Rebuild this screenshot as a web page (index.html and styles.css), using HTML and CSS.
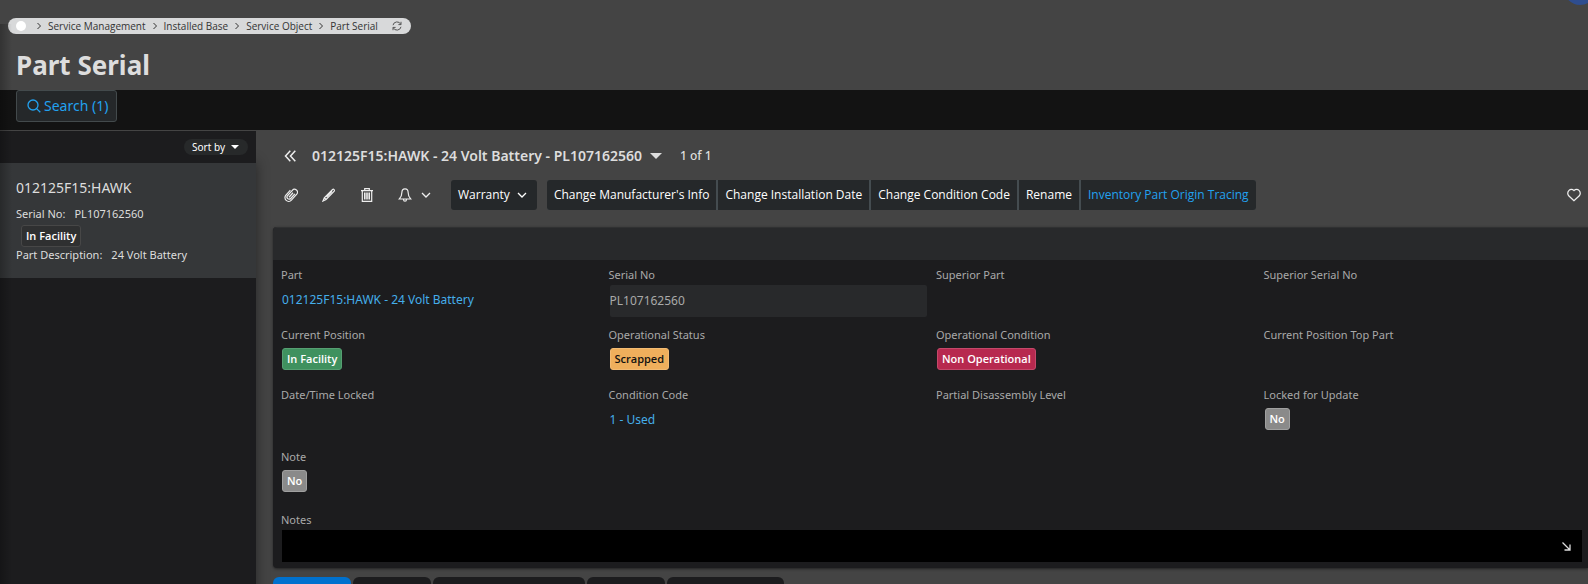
FILE: index.html
```html
<!DOCTYPE html>
<html lang="en">
<head>
<meta charset="utf-8">
<title>Part Serial</title>
<link rel="stylesheet" href="styles.css">
</head>
<body>
<header class="page-head">
  <nav class="crumbs" aria-label="Breadcrumb">
    <a class="crumb-home" href="#" aria-label="Home"></a>
    <svg class="sep" viewBox="0 0 4 8"><path d="M.5 1l3 3-3 3"/></svg>
    <a href="#">Service Management</a>
    <svg class="sep" viewBox="0 0 4 8"><path d="M.5 1l3 3-3 3"/></svg>
    <a href="#">Installed Base</a>
    <svg class="sep" viewBox="0 0 4 8"><path d="M.5 1l3 3-3 3"/></svg>
    <a href="#">Service Object</a>
    <svg class="sep" viewBox="0 0 4 8"><path d="M.5 1l3 3-3 3"/></svg>
    <a href="#">Part Serial</a>
    <button class="refresh" type="button" aria-label="Refresh">
      <svg viewBox="0 0 10 10"><path d="M1 4.2A4.1 4.1 0 0 1 8.8 3.4M9 .8v2.8H6.4M9 5.8A4.1 4.1 0 0 1 1.2 6.6M1 9.2V6.4h2.6"/></svg>
    </button>
  </nav>
  <h1>Part Serial</h1>
  <button class="user-avatar" type="button" aria-label="User menu"></button>
</header>

<div class="search-bar">
  <button class="search-btn" type="button">
    <svg viewBox="0 0 14 14"><circle cx="6" cy="6" r="5"/><path d="M9.6 9.6L13.3 13.3"/></svg>Search (1)
  </button>
</div>

<div class="workspace">
  <aside class="sidebar">
    <div class="sort-row">
      <button class="sort-btn" type="button">Sort by<svg viewBox="0 0 8 4"><path d="M0 0h8L4 4z"/></svg></button>
    </div>
    <article class="card">
      <h2>012125F15:HAWK</h2>
      <p><span>Serial No:</span><span>PL107162560</span></p>
      <span class="tag tag-plain">In Facility</span>
      <p><span>Part Description:</span><span>24 Volt Battery</span></p>
    </article>
  </aside>

  <main class="main">
    <div class="record-row">
      <button class="icon-btn" type="button" aria-label="Collapse list"><svg class="i-12" viewBox="0 0 12 12"><path d="M6.300 .8L1.500 6l4.800 5.200M11.300 .8L6.500 6l4.800 5.200"/></svg></button>
      <button class="record-btn" type="button">012125F15:HAWK - 24 Volt Battery - PL107162560<svg viewBox="0 0 12 6"><path d="M0 0h12L6 6z"/></svg></button>
      <span class="count">1 of 1</span>
    </div>

    <div class="toolbar">
      <div class="tools">
        <button class="icon-btn" type="button" aria-label="Attachments"><svg class="i-14" viewBox="0 0 14 14"><g transform="rotate(42 7 7)"><path d="M9.100 3.600v6.200a2.100 2.100 0 0 1-4.200 0V2.600M4.900 10V2.700a2.900 2.900 0 0 1 5.800-.2v8a3.700 3.700 0 0 1-7.400 0V3.800M7 4v6"/></g></svg></button>
        <button class="icon-btn" type="button" aria-label="Edit"><svg class="i-14" viewBox="0 0 14 14"><path d="M1 13l1.300-3.200 8.300-8.300c1-.8 2.300.5 1.600 1.600L4.100 11.500zM2.600 9.900l1.300 1.400M10 3.400L4.500 9"/></svg></button>
        <button class="icon-btn" type="button" aria-label="Delete"><svg class="i-14" viewBox="0 0 14 14"><path d="M1 2.600h12M4.700 2.500V.7h4.600v1.800M2.300 2.700v10.600h9.400V2.700M4.600 4.500v7M6.200 4.500v7M7.800 4.500v7M9.400 4.500v7"/></svg></button>
        <button class="icon-btn bell" type="button" aria-label="Notifications"><svg class="i-14" viewBox="0 0 14 14"><path d="M7 .8C4.700.8 3.900 2.500 3.900 4.300c0 3.400-.5 4.700-2.600 6.700h11.400c-2.100-2-2.600-3.300-2.600-6.700C10.100 2.500 9.300.8 7 .8zM5.500 11.200c0 2.700 3 2.700 3 0"/></svg><svg class="chev" viewBox="0 0 10 6"><path d="M1 1l4 4 4-4"/></svg></button>
      </div>
      <button class="cmd cmd-menu" type="button">Warranty<svg class="chev" viewBox="0 0 10 6"><path d="M1 1l4 4 4-4"/></svg></button>
      <div class="cmd-group">
        <button class="cmd" type="button">Change Manufacturer's Info</button>
        <button class="cmd" type="button">Change Installation Date</button>
        <button class="cmd" type="button">Change Condition Code</button>
        <button class="cmd" type="button">Rename</button>
        <a class="cmd cmd-link" href="#">Inventory Part Origin Tracing</a>
      </div>
      <button class="icon-btn fav" type="button" aria-label="Favourite"><svg class="i-14" viewBox="0 0 14 14"><path d="M7 12.800L1.700 7.800C-1 4.200 3.500-1.200 7 2.600c3.500-3.800 8 1.600 5.300 5.200z"/></svg></button>
    </div>

    <section class="panel">
      <div class="panel-head"></div>
      <div class="fields">
        <div class="field"><span class="label">Part</span><a class="link" href="#">012125F15:HAWK - 24 Volt Battery</a></div>
        <div class="field"><label class="label" for="serial">Serial No</label><input id="serial" class="text" value="PL107162560" readonly></div>
        <div class="field"><span class="label">Superior Part</span></div>
        <div class="field"><span class="label">Superior Serial No</span></div>

        <div class="field"><span class="label">Current Position</span><span class="tag tag-green">In Facility</span></div>
        <div class="field"><span class="label">Operational Status</span><span class="tag tag-amber">Scrapped</span></div>
        <div class="field"><span class="label">Operational Condition</span><span class="tag tag-red">Non Operational</span></div>
        <div class="field"><span class="label">Current Position Top Part</span></div>

        <div class="field"><span class="label">Date/Time Locked</span></div>
        <div class="field"><span class="label">Condition Code</span><a class="link" href="#">1 - Used</a></div>
        <div class="field"><span class="label">Partial Disassembly Level</span></div>
        <div class="field"><span class="label">Locked for Update</span><span class="tag tag-grey">No</span></div>

        <div class="field"><span class="label">Note</span><span class="tag tag-grey">No</span></div>
        <div class="field wide">
          <label class="label" for="notes">Notes</label>
          <div class="notes-box">
            <textarea id="notes" class="notes" rows="1"></textarea>
            <button class="expand" type="button" aria-label="Expand notes"><svg viewBox="0 0 9 9"><path d="M.5.5l7.500 7.500M8 2.500V8H2.500"/></svg></button>
          </div>
        </div>
      </div>
    </section>

    <div class="tabs" role="tablist">
      <button class="tab active" type="button" role="tab" aria-label="Tab 1"></button>
      <button class="tab" type="button" role="tab" aria-label="Tab 2"></button>
      <button class="tab tab-l" type="button" role="tab" aria-label="Tab 3"></button>
      <button class="tab" type="button" role="tab" aria-label="Tab 4"></button>
      <button class="tab tab-m" type="button" role="tab" aria-label="Tab 5"></button>
    </div>
  </main>
</div>
</body>
</html>
```
FILE: styles.css
```css
* { box-sizing: border-box; }
body {
  margin: 0;
  height: 100vh;
  overflow: hidden;
  display: flex;
  flex-direction: column;
  background: #444;
  color: #ddd;
  font: 11px/16px "Noto Sans", "Open Sans", sans-serif;
  position: relative;
}
/* soft shade cast by the window edge */
body::before {
  content: "";
  position: absolute;
  inset: 24px auto 0 0;
  width: 12px;
  background: linear-gradient(90deg, rgba(0,0,0,.25), transparent);
  pointer-events: none;
  z-index: 2;
}
button { font: inherit; color: inherit; background: none; border: 0; padding: 0; margin: 0; cursor: pointer; }
a { color: inherit; text-decoration: none; }
h1, h2, p { margin: 0; }
svg { fill: none; stroke: currentColor; display: block; flex: none; }

.page-head { flex: none; padding: 18px 8px 8px; position: relative; }
.crumbs {
  display: inline-flex;
  align-items: center;
  gap: 7px;
  height: 16px;
  padding: 0 9px 1px 8px;
  border-radius: 8px;
  background: #d8d9da;
  color: #333;
  font-family: "Open Sans", "Noto Sans", sans-serif;
  font-size: 10px;
  line-height: 14px;
  vertical-align: top;
}
.crumb-home { width: 10px; height: 10px; border-radius: 50%; background: #fff; margin-right: 4px; }
.sep { width: 4px; height: 8px; }
.refresh { margin-left: 7px; color: #555; }
.refresh svg { width: 10px; height: 10px; }
h1 { margin: 14px 8px 0; font-size: 26px; line-height: 34px; font-weight: 700; }
.user-avatar { position: absolute; right: -8px; top: -27px; width: 32px; height: 32px; border-radius: 50%; background: #2e4d8f; }

.search-bar { flex: none; height: 40px; padding: 0 16px; background: #131313; }
.search-btn {
  display: flex;
  align-items: center;
  gap: 3px;
  height: 32px;
  padding: 0 8px 0 10px;
  border: 1px solid #434a4c;
  border-radius: 3px;
  background: #25282a;
  color: #22a2f0;
  font-size: 14px;
}
.search-btn svg { width: 14px; height: 14px; stroke-width: 1.3; }

.workspace { flex: 1; display: flex; min-height: 0; }
.sidebar { flex: none; width: 256px; background: #1c1c1e; border-top: 1px solid #444; box-shadow: 0 32px 12px rgba(0,0,0,.45); }
.sort-row { height: 32px; display: flex; align-items: center; justify-content: flex-end; padding-right: 8px; }
.sort-btn {
  display: flex;
  align-items: center;
  gap: 6px;
  height: 16px;
  padding: 0 9px 0 8px;
  border-radius: 8px;
  background: #27292a;
  color: #fff;
  font-size: 10px;
}
.sort-btn svg { width: 8px; height: 4px; fill: currentColor; stroke: none; }
.card { display: flex; flex-direction: column; align-items: flex-start; padding: 14px 16px; background: #353739; height: 115px; }
.card h2 { font-size: 14px; line-height: 22px; font-weight: 400; margin-bottom: 7px; }
.card p { display: flex; gap: 9px; }

.tag {
  display: inline-block;
  height: 22px;
  padding: 0 4px;
  border: 1px solid transparent;
  border-radius: 3px;
  font-family: "Open Sans", "Noto Sans", sans-serif;
  font-weight: 600;
  line-height: 20px;
  color: #fff;
}
.tag-plain { margin: 3px 0 0 5px; border-color: #474747; background: #2f3031; }
.tag-green { background: #3f915f; border-color: #569f72; }
.tag-amber { background: #efaf5c; border-color: #f3bb73; color: #111; }
.tag-red { background: #b7294f; border-color: #c4486a; }
.tag-grey { background: #8a8a8a; border-color: #a0a0a0; }

.main { flex: 1; min-width: 0; padding: 16px 0 0 17px; }
.record-row { display: flex; align-items: center; height: 20px; padding-left: 11px; }
.record-btn { display: flex; align-items: center; gap: 8px; margin: 0 18px 0 16px; font-size: 14px; font-weight: 600; line-height: 20px; }
.record-btn svg { width: 12px; height: 6px; fill: currentColor; stroke: none; }
.count { font-size: 12px; font-weight: 500; }
.icon-btn { color: #eee; display: flex; align-items: center; }
.i-12 { width: 12px; height: 12px; stroke-width: 1.5; }
.i-14 { width: 14px; height: 14px; stroke-width: 1.2; }
.chev { width: 10px; height: 6px; stroke-width: 1.3; }

.toolbar { display: flex; align-items: center; margin-top: 14px; padding: 0 7px 0 11px; }
.tools { display: flex; gap: 24px; margin-right: 20px; }
.bell { gap: 9px; }
.cmd {
  display: flex;
  align-items: center;
  gap: 8px;
  height: 30px;
  padding: 0 7px;
  background: #25282a;
  color: #fff;
  font-family: "Open Sans", "Noto Sans", sans-serif;
  font-size: 12px;
  white-space: nowrap;
}
.cmd-menu { gap: 7px; border-radius: 3px; padding-right: 10px; margin-right: 10px; }
.cmd-group { display: flex; gap: 2px; border-radius: 3px; overflow: hidden; background: #444c50; }
.cmd-link { color: #22a2f0; }
.fav { margin-left: auto; }

.panel { margin-top: 17px; background: #1c1c1e; border-radius: 4px 0 0 4px; overflow: hidden; box-shadow: 0 1px 3px rgba(0,0,0,.5); }
.panel-head { height: 33px; background: #28292b; border-top: 1px solid #303132; }
.fields {
  display: grid;
  grid-template-columns: repeat(4, minmax(0, 1fr));
  grid-template-rows: 60px 60px 62px 63px auto;
  column-gap: 9px;
  padding: 6px 6px 6px 8px;
}
.field { display: flex; flex-direction: column; align-items: flex-start; }
.wide { grid-column: 1 / -1; }
.label { color: #a9a9a9; line-height: 18px; }
.field .tag { margin: 4px 0 0 1px; }
.link { margin: 7px 0 0 1px; color: #45aeea; font-size: 12px; line-height: 18px; }
.text { width: calc(100% - 1px); height: 32px; margin: 1px 0 0 1px; border: 0; padding: 0 0 2px; background: #28292b; color: #a9a9a9; font: 12px/18px "Noto Sans", sans-serif; border-radius: 2px; }
.notes-box { display: flex; align-items: center; align-self: stretch; margin: 1px 0 0 1px; background: #000; height: 32px; }
.notes { flex: 1; height: 32px; border: 0; padding: 8px; background: none; color: #ddd; font: inherit; resize: none; }
.expand { padding: 0 11px; }
.expand svg { width: 9px; height: 9px; stroke-width: 1.3; color: #ddd; }

.tabs { display: flex; gap: 2px; margin-top: 9px; }
.tab { flex: none; width: 78px; height: 32px; border-radius: 6px 6px 0 0; background: #1c1c1e; }
.tab.active { background: #0071ce; }
.tab-l { width: 152px; }
.tab-m { width: 117px; }
```
